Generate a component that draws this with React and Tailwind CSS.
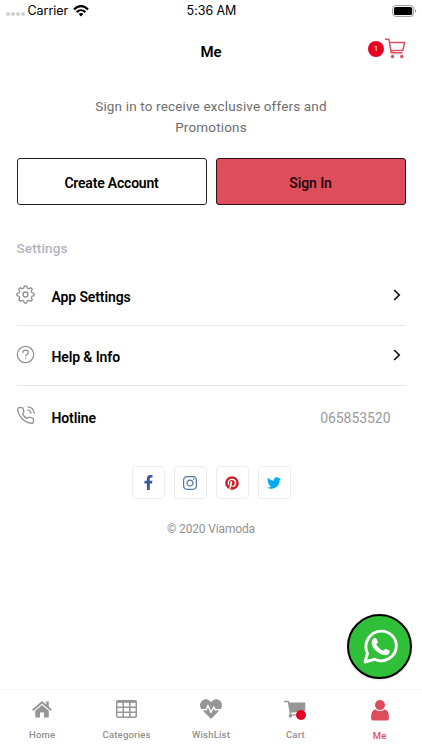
import React from "react";
import { FaFacebookF, FaInstagram, FaPinterest, FaTwitter, FaHeartbeat } from "react-icons/fa";
import { FiPhoneCall } from "react-icons/fi";

function StatusBar() {
  return (
    <header className="grid h-[21px] grid-cols-3 items-center pl-[6px] pr-[5px] font-['Inter',sans-serif] text-[12.5px] leading-5 text-black">
      <div className="flex items-center">
        <div className="mr-[3px] mt-[7px] flex gap-[1.5px]">
          {[0, 1, 2, 3].map((i) => (
            <span key={i} className="h-[3.5px] w-[3.5px] rounded-full bg-[#cfcfcf]" />
          ))}
        </div>
        <span className="tracking-[-0.05px]">Carrier</span>
        <svg className="ml-[5px]" width="16" height="12" viewBox="0 0 16 12" fill="none" stroke="#000" strokeWidth="2.2">
          <path d="M1 4.4C5-.1 11-.1 15 4.4" />
          <path d="M3.7 7.1C6.2 4.6 9.8 4.6 12.3 7.1" />
          <path d="M5.6 9C7 7.8 9 7.8 10.4 9L8 11.5Z" fill="#000" stroke="none" />
        </svg>
      </div>
      <span className="text-center tracking-[-0.05px]">5:36 AM</span>
      <svg className="justify-self-end" width="25" height="12" viewBox="0 0 25 12">
        <rect x=".6" y=".6" width="21" height="10.8" rx="3" fill="none" stroke="#999" />
        <rect x="2" y="2" width="18.2" height="8" rx="1.6" />
        <path d="M23 4c1.6.6 1.6 3.4 0 4z" fill="#999" />
      </svg>
    </header>
  );
}

function OutlineCart() {
  return (
    <svg width="21" height="21" viewBox="0 0 21 21" fill="none" stroke="#df4d5d" strokeWidth="1.5" strokeLinejoin="round">
      <path d="M0 1.2h3.8L6.3 14.8H17.7M4.4 4.4H19.7L17.8 12.2 5.9 12.8" />
      <circle cx="7.5" cy="18.5" r="1.7" fill="#df4d5d" stroke="none" />
      <circle cx="16.8" cy="18.5" r="1.7" fill="#df4d5d" stroke="none" />
    </svg>
  );
}

// Eight rounded teeth traced around the centre of the icon.
const gearPoints = Array.from({ length: 96 }, (_, i) => {
  const a = (i / 96) * Math.PI * 2;
  const r = 7.6 + Math.tanh(2.2 * Math.cos(8 * a)) * 1.05;
  return `${(9.5 + r * Math.cos(a)).toFixed(2)},${(9.5 + r * Math.sin(a)).toFixed(2)}`;
}).join(" ");

function GearIcon() {
  return (
    <svg width="19" height="19" viewBox="0 0 19 19" fill="none" stroke="currentColor" strokeWidth="1.3" strokeLinejoin="round">
      <polygon points={gearPoints} />
      <circle cx="9.5" cy="9.5" r="2.5" />
    </svg>
  );
}

function HelpIcon() {
  return (
    <svg width="19" height="19" viewBox="0 0 19 19" fill="none" stroke="currentColor" strokeWidth="1.2" strokeLinecap="round">
      <circle cx="9.5" cy="9.5" r="8.2" />
      <path d="M7 7.6c0-3.3 5.2-3.3 5.2 0 0 1.8-2.6 1.8-2.6 3.5" />
      <circle cx="9.6" cy="13.4" r=".4" fill="currentColor" strokeWidth=".5" />
    </svg>
  );
}

function Chevron() {
  return (
    <svg width="8" height="12" viewBox="0 0 8 12" fill="none" stroke="#111" strokeWidth="1.7">
      <path d="M1.2 1 6.2 6l-5 5" />
    </svg>
  );
}

function Row({ icon, label, children, last }) {
  return (
    <div className={last ? "flex h-[60px] items-center pt-[2px]" : "flex h-[60px] items-center border-b border-[#e7e7e7]"}>
      <div className="w-[35px] pb-[3px] text-[#8d8d8d]"><div className="-ml-px">{icon}</div></div>
      <span className="grow pt-[3px] text-[14px] font-semibold tracking-[-0.12px]">{label}</span>
      {children}
    </div>
  );
}

function WhatsAppIcon() {
  return (
    <svg className="ml-px" width="35" height="35" viewBox="0 0 35 35">
      <path d="M2 33 4.5 24.5C-.5 14 7 2.1 18.3 2.1c8.5 0 15 6.6 15 14.7 0 11.3-12 18.3-22 13.5z" fill="none" stroke="#fff" strokeWidth="2.9" strokeLinejoin="round" />
      <path d="M10.3 9.5c.9-1.2 2.7-1.1 3.2.2l1.3 3.1c.4 1-1.1 1.9-1.5 2.7 1.7 3 3.9 5 7 6.2 1-.6 1.7-2.2 2.8-1.8l3.2 1.6c1.1.6.2 2.9-.7 3.7-2.7 2.2-7.3.4-10.4-1.7-3.3-2.3-6.3-5.8-6.6-9.3-.1-1.8.6-3.3 1.7-4.7z" fill="#fff" />
    </svg>
  );
}

function HomeIcon() {
  return (
    <svg width="20" height="17" viewBox="0 0 20 17" fill="#969696">
      <path d="M.7 9.3 10 1.3l9.3 8" fill="none" stroke="#969696" strokeWidth="1.9" />
      <path d="M14.2.4h2.6v6l-2.6-2.2zM3.2 9.7 10 4l6.8 5.7v5.8q0 1-1 1H12v-5H8v5H4.2q-1 0-1-1z" />
    </svg>
  );
}

function TableIcon() {
  return (
    <svg width="21" height="18" viewBox="0 0 21 18" fill="none" stroke="#969696" strokeWidth="1.5">
      <rect x=".7" y=".7" width="19.6" height="16.5" rx="1.6" />
      <path d="M.9 1.6h19.2" strokeWidth="2.5" />
      <path d="M1 7.2h19M1 12.2h19M7.2 2v15M13.8 2v15" />
    </svg>
  );
}

function SolidCart() {
  return (
    <svg width="22" height="18" viewBox="0 0 22 18" fill="#969696">
      <path d="M0 .7h4.8l.5 1.7h16v8.5L6.9 12.8v1.4H19v1.4H5.5V12L3.8 2.2H0z" />
      <circle cx="6.3" cy="16" r="1.7" />
      <circle cx="17.5" cy="16" r="1.7" />
    </svg>
  );
}

function PersonIcon() {
  return (
    <svg width="18" height="21" viewBox="0 0 18 21" fill="#df4d5d">
      <circle cx="9" cy="5.1" r="5" />
      <path d="M4.2 9.5q4.8 3.2 9.6 0 4.2.9 4.2 8.2 0 2.8-2.6 2.8H2.6Q0 20.5 0 17.7 0 10.4 4.2 9.5z" />
    </svg>
  );
}

function Tab({ icon, label, active }) {
  return (
    <div className={active ? "flex w-1/5 flex-col items-center pt-[10px] text-[#df4d5d]" : "flex w-1/5 flex-col items-center pt-[9px] text-[#8f8f8f]"}>
      <div className="flex h-[20px] items-center justify-center">{icon}</div>
      <span className="mt-[10px] text-[9.5px] font-medium leading-[12px] tracking-[0.2px]">{label}</span>
    </div>
  );
}

const socialBox = "flex h-[33px] w-[33px] items-center justify-center rounded-[4px] border border-[#ebecf0]";

export default function App() {
  return (
    <div className="relative flex h-[750px] w-[422px] flex-col overflow-hidden bg-white font-['Roboto',sans-serif] text-black">
      <StatusBar />
      <div className="grid h-[62px] grid-cols-3 items-center pl-4 pr-4">
        <span />
        <h1 className="text-center text-[15px] font-semibold">Me</h1>
        <div className="flex items-center justify-end gap-px pb-[8px]">
          <span className="mt-[2px] flex h-4 w-4 items-center justify-center rounded-full bg-[#e60023] text-[8px] text-white">1</span>
          <OutlineCart />
        </div>
      </div>

      <p className="mt-[13px] text-center text-[13.5px] leading-[21px] tracking-[0.16px] text-[#6e6e6e]">
        Sign in to receive exclusive offers and<br />Promotions
      </p>

      <div className="ml-[16.5px] mr-[16.5px] mt-5 grid grid-cols-2 gap-[9px]">
        <button className="h-[47px] rounded-[3px] border border-[#222] pt-[4px] text-[14px] font-semibold tracking-[-0.2px]">Create Account</button>
        <button className="h-[47px] rounded-[3px] border border-[#2c1015] bg-[#df4d5d] pt-[4px] text-[14px] font-semibold tracking-[-0.1px] text-[#26080c]">Sign In</button>
      </div>

      <section className="ml-[16.5px] mr-[16.5px] mt-[33px]">
        <h2 className="text-[13.5px] font-medium leading-5 tracking-[0.15px] text-[#afb5bd]">Settings</h2>
        <div className="mt-[8px]">
          <Row icon={<GearIcon />} label="App Settings"><span className="pb-[1px] pr-[5px]"><Chevron /></span></Row>
          <Row icon={<HelpIcon />} label="Help & Info"><span className="pb-[1px] pr-[5px]"><Chevron /></span></Row>
          <Row icon={<FiPhoneCall size={19} strokeWidth={1.6} />} label="Hotline" last>
            <span className="pr-[15px] pt-[3px] text-[14px] tracking-[-0.05px] text-[#999]">065853520</span>
          </Row>
        </div>
      </section>

      <div className="mt-[20px] flex justify-center gap-[9px]">
        <span className={socialBox}><FaFacebookF size={15} color="#3b5998" /></span>
        <span className={socialBox}><FaInstagram size={16} color="#55799d" /></span>
        <span className={socialBox}><FaPinterest size={14} color="#c8232c" /></span>
        <span className={socialBox}><FaTwitter size={14} color="#00aced" /></span>
      </div>
      <p className="mt-[20px] text-center text-[12px] leading-5 tracking-[-0.15px] text-[#929292]">© 2020 Viamoda</p>

      <div className="absolute left-[347px] top-[614px] flex h-[65px] w-[65px] items-center justify-center rounded-full border-2 border-black bg-[#30bf39] shadow-sm">
        <WhatsAppIcon />
      </div>

      <nav className="mt-auto flex h-[61px] border-t border-[#f3f3f3]">
        <Tab icon={<HomeIcon />} label="Home" />
        <Tab icon={<TableIcon />} label="Categories" />
        <Tab icon={<FaHeartbeat size={22} color="#969696" />} label="WishList" />
        <Tab
          icon={
            <span className="relative">
              <SolidCart />
              <i className="absolute left-[12px] top-[10px] h-[10px] w-[10px] rounded-full bg-[#e60023]" />
            </span>
          }
          label="Cart"
        />
        <Tab icon={<PersonIcon />} label="Me" active />
      </nav>
    </div>
  );
}
